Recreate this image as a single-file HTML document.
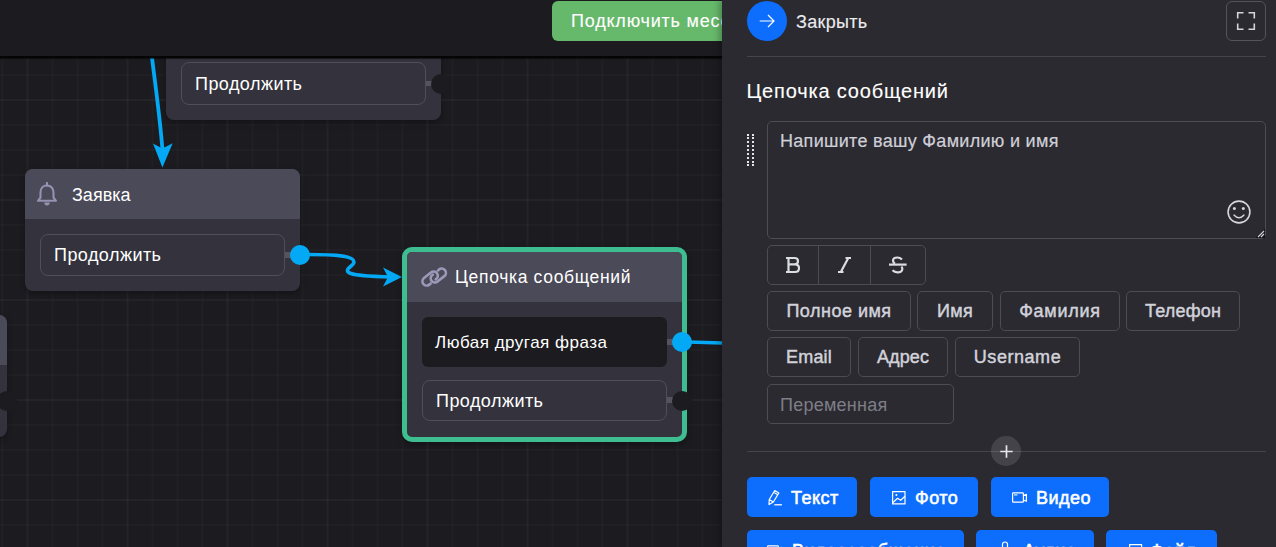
<!DOCTYPE html>
<html><head><meta charset="utf-8">
<style>
*{box-sizing:border-box;margin:0;padding:0}
html,body{width:1276px;height:547px;overflow:hidden;background:#1c1b20;font-family:"Liberation Sans",sans-serif;}
.a{position:absolute}
.t{position:absolute;white-space:nowrap;line-height:normal}
#canvas{position:absolute;left:0;top:0;width:722px;height:547px;background-color:#1c1b20;
 background-image:
  linear-gradient(to right, rgba(255,255,255,0.02) 2px, transparent 2px),
  linear-gradient(to bottom, rgba(255,255,255,0.02) 2px, transparent 2px),
  linear-gradient(to right, rgba(255,255,255,0.02) 2px, transparent 2px),
  linear-gradient(to bottom, rgba(255,255,255,0.02) 2px, transparent 2px);
 background-size:100px 100px,100px 100px,25px 25px,25px 25px;
 background-position:26.5px 0,0 -1px,1.5px 0,0 -1px;}
.node{position:absolute;background:#34333d;border-radius:8px;box-shadow:0 3px 6px rgba(0,0,0,0.3)}
.nhead{position:absolute;left:0;top:0;right:0;background:#4b4a58}
.nbtn{position:absolute;border:1px solid #504f59;border-radius:8px}
.conn{position:absolute;height:6px;background:#55545e}
.hdark{position:absolute;width:20px;height:20px;border-radius:50%;background:#1c1b20}
.hblue{position:absolute;width:20px;height:20px;border-radius:50%;background:#03a9f4}
.vb{position:absolute;height:40px;border:1px solid #4d4c53;border-radius:5px}
.bb{position:absolute;height:40px;background:#0d6efd;border-radius:5px}
</style></head><body>
<div id="canvas"></div>
<svg class="a" style="left:0;top:0" width="722" height="547" viewBox="0 0 722 547">
 <path d="M151,50 C156,90 161,125 162.8,155" stroke="#03a9f4" stroke-width="3.8" fill="none"/>
 <path d="M162.4,167.5 L153,143.5 L162.3,148.5 L172.7,143.2 Z" fill="#03a9f4"/>
 <path d="M308,254.5 C338,254.5 354,256 354,262 C354,266 345,268 348,272 C352,276 372,276.5 392,277" stroke="#03a9f4" stroke-width="3.6" fill="none"/>
 <path d="M402,277 L383,267.5 L388,277 L383,286.5 Z" fill="#03a9f4"/>
 <path d="M688,342 L722,343" stroke="#03a9f4" stroke-width="3.6" fill="none"/>
</svg>
<div class="node" style="left:166px;top:20px;width:275px;height:100px"></div>
<div class="nbtn" style="left:181px;top:62px;width:245px;height:43px"></div>
<div class="conn" style="left:426px;top:81px;width:8px;height:5px"></div>
<div class="hdark" style="left:431px;top:74px"></div>
<div class="t" style="left:195px;top:74px;font-size:18px;color:#fff;font-weight:400;letter-spacing:0.45px;">Продолжить</div>
<div class="node" style="left:25px;top:169px;width:275px;height:122px;overflow:hidden"><div class="nhead" style="height:50px"></div></div>
<svg class="a" style="left:36px;top:182px" width="22" height="24" viewBox="0 0 22 24">
 <path d="M11 3.5 C7 3.5 4.5 6.5 4.5 10.5 L4.5 15.5 L2 18.8 L20 18.8 L17.5 15.5 L17.5 10.5 C17.5 6.5 15 3.5 11 3.5 Z" fill="none" stroke="#9493b3" stroke-width="2.1" stroke-linejoin="round"/>
 <path d="M11 1 L11 3.5" stroke="#9493b3" stroke-width="2.2" stroke-linecap="round"/>
 <path d="M8.2 20.5 L13.8 20.5 Q13.5 23.5 11 23.5 Q8.5 23.5 8.2 20.5 Z" fill="#9493b3"/>
</svg>
<div class="t" style="left:72px;top:185px;font-size:18px;color:#fff;font-weight:400;letter-spacing:0px;">Заявка</div>
<div class="nbtn" style="left:40px;top:234px;width:245px;height:42px"></div>
<div class="t" style="left:54px;top:245px;font-size:18px;color:#fff;font-weight:400;letter-spacing:0.45px;">Продолжить</div>
<div class="conn" style="left:285px;top:252px;width:8px"></div>
<div class="hblue" style="left:290px;top:245px"></div>
<div class="node" style="left:-270px;top:315px;width:277px;height:121.5px;overflow:hidden"><div class="nhead" style="height:50px"></div></div>
<div class="hdark" style="left:-3px;top:391px"></div>
<div class="a" style="left:402px;top:247px;width:285px;height:195px;border:5px solid #3ebe90;border-radius:10px;background:#34333d;overflow:hidden;box-shadow:0 3px 6px rgba(0,0,0,0.3)"><div class="nhead" style="height:50px"></div></div>
<svg class="a" style="left:410px;top:262px" width="50" height="32" viewBox="410 262 50 32">
 <g transform="translate(434.3,277.3) rotate(-39) scale(0.9)" fill="none" stroke="#9a99b8" stroke-width="2.9" stroke-linecap="round">
  <path d="M -7.5 2.85 L -9.4 2.85 A 4.7 4.7 0 0 1 -9.4 -6.55 L 0.5 -6.55 A 4.7 4.7 0 1 1 -0.32 2.78"/>
  <path d="M 8 -3.4 L 9.5 -3.4 A 4.7 4.7 0 0 1 9.5 6.0 L -0.2 6.0 A 4.7 4.7 0 1 1 0.62 -3.33"/>
 </g>
</svg>
<div class="t" style="left:455px;top:267px;font-size:17.5px;color:#fff;font-weight:400;letter-spacing:0.67px;">Цепочка сообщений</div>
<div class="a" style="left:422px;top:317px;width:245px;height:50px;background:#1c1b20;border-radius:6px"></div>
<div class="t" style="left:435px;top:333px;font-size:17px;color:#fff;font-weight:400;letter-spacing:0.5px;">Любая другая фраза</div>
<div class="nbtn" style="left:422px;top:380px;width:245px;height:41px"></div>
<div class="t" style="left:436px;top:391px;font-size:18px;color:#fff;font-weight:400;letter-spacing:0.45px;">Продолжить</div>
<div class="conn" style="left:667px;top:339px;width:8px"></div>
<div class="hblue" style="left:672px;top:332px"></div>
<div class="conn" style="left:667px;top:397px;width:8px"></div>
<div class="hdark" style="left:672px;top:390.5px"></div>
<div class="a" style="left:0;top:0;width:722px;height:57.5px;background:#1c1b20;border-bottom:2px solid #050506;box-shadow:0 1px 1px rgba(0,0,0,0.5)"></div>
<div class="a" style="left:552px;top:1px;width:200px;height:40px;background:#66b86b;border-radius:6px"></div>
<div class="t" style="left:571px;top:11px;font-size:18px;color:#fff;font-weight:400;letter-spacing:0.8px;-webkit-text-stroke:0.12px #fff;">Подключить мессенджер</div>
<div class="a" style="left:722px;top:0;width:554px;height:547px;background:#2b2a30;box-shadow:-3px 0 6px rgba(0,0,0,0.25)"></div>
<div class="a" style="left:747px;top:1px;width:40px;height:40px;border-radius:50%;background:#0d6efd"></div>
<svg class="a" style="left:757px;top:11px" width="20" height="20" viewBox="0 0 20 20">
 <path d="M2.7 10 H17 M11 4 L17 10 L11 16" fill="none" stroke="#fff" stroke-width="1.2"/>
</svg>
<div class="t" style="left:796px;top:12px;font-size:18px;color:#ececf0;font-weight:400;letter-spacing:0.3px;-webkit-text-stroke:0.12px #ececf0;">Закрыть</div>
<div class="a" style="left:1226px;top:1px;width:40px;height:40px;border:1px solid #55545b;border-radius:6px"></div>
<svg class="a" style="left:1236px;top:11px" width="20" height="20" viewBox="0 0 20 20">
 <path d="M1.7 7.5 V1.7 H7.5 M12.5 1.7 H18.3 V7.5 M18.3 12.5 V18.3 H12.5 M7.5 18.3 H1.7 V12.5" fill="none" stroke="#d4d4dc" stroke-width="1.6"/>
</svg>
<div class="a" style="left:747px;top:56px;width:519px;height:1px;background:#45444b"></div>
<div class="t" style="left:746.5px;top:80px;font-size:20px;color:#fff;font-weight:400;letter-spacing:0.82px;-webkit-text-stroke:0.12px #fff;">Цепочка сообщений</div>
<svg class="a" style="left:740px;top:130px" width="20" height="40" viewBox="740 130 20 40"><g fill="#e6e6ea"><rect x="747" y="134" width="2" height="2"/><rect x="747" y="137" width="2" height="2"/><rect x="747" y="141" width="2" height="2"/><rect x="747" y="145" width="2" height="2"/><rect x="747" y="149" width="2" height="2"/><rect x="747" y="153" width="2" height="2"/><rect x="747" y="157" width="2" height="2"/><rect x="747" y="161" width="2" height="2"/><rect x="747" y="164" width="2" height="2"/><rect x="752" y="134" width="2" height="2"/><rect x="752" y="137" width="2" height="2"/><rect x="752" y="141" width="2" height="2"/><rect x="752" y="145" width="2" height="2"/><rect x="752" y="149" width="2" height="2"/><rect x="752" y="153" width="2" height="2"/><rect x="752" y="157" width="2" height="2"/><rect x="752" y="161" width="2" height="2"/><rect x="752" y="164" width="2" height="2"/></g></svg>
<div class="a" style="left:767px;top:121px;width:499px;height:118px;border:1px solid #4d4c53;border-radius:5px"></div>
<div class="t" style="left:780px;top:131px;font-size:18px;color:#cfcfd8;font-weight:400;letter-spacing:0.3px;-webkit-text-stroke:0.2px #cfcfd8;">Напишите вашу Фамилию и имя</div>
<svg class="a" style="left:1226px;top:199px" width="26" height="26" viewBox="0 0 26 26">
 <circle cx="13" cy="13" r="10.9" fill="none" stroke="#d6d6de" stroke-width="1.6"/>
 <circle cx="8.4" cy="9.6" r="1.5" fill="#d6d6de"/><circle cx="17.3" cy="9.6" r="1.5" fill="#d6d6de"/>
 <path d="M8.2 16.2 Q13 21.2 17.8 16.2" fill="none" stroke="#d6d6de" stroke-width="1.6" stroke-linecap="round"/>
</svg>
<svg class="a" style="left:1254px;top:227px" width="12" height="12" viewBox="0 0 12 12">
 <path d="M11 1.5 L11 11 L1.5 11 Z" fill="#141417"/>
 <path d="M10 4 L4 10 M10 7 L7 10" stroke="#d0d0d6" stroke-width="1.3"/>
</svg>
<div class="a" style="left:767px;top:245px;width:159px;height:40px;border:1px solid #4d4c53;border-radius:5px"></div>
<div class="a" style="left:818px;top:245px;width:1px;height:40px;background:#4d4c53"></div>
<div class="a" style="left:870px;top:245px;width:1px;height:40px;background:#4d4c53"></div>
<svg class="a" style="left:780px;top:250px" width="135" height="30" viewBox="780 250 135 30">
 <g fill="none" stroke="#dcdce4" stroke-width="2.2" stroke-linejoin="round">
  <path d="M786 258 H794.5 Q798 258 798 261 Q798 264.3 794.5 264.3 H788.5 M788.5 258 V272 M786 272 H795 Q799 272 799 268.2 Q799 264.3 795 264.3"/>
  <path d="M845.5 258 H851 M838 272 H843.5 M848.3 258 L840.8 272"/>
  <path d="M889 264.6 H906.6"/>
  <path d="M902 259.5 Q900 257.5 897.5 257.5 Q893 257.5 893 260.8 Q893 262.5 895 263.6"/>
  <path d="M901.5 266.5 Q902.5 268 902.3 269.3 Q901.8 272.3 897.5 272.3 Q894.5 272.3 892.5 270.3"/>
 </g>
</svg>
<div class="vb" style="left:767px;top:291px;width:144px"></div>
<div class="t" style="left:767px;top:301px;width:144px;text-align:center;font-size:18px;color:#d2d2db;-webkit-text-stroke:0.45px #d2d2db;letter-spacing:0.5px">Полное имя</div>
<div class="vb" style="left:917px;top:291px;width:76px"></div>
<div class="t" style="left:917px;top:301px;width:76px;text-align:center;font-size:18px;color:#d2d2db;-webkit-text-stroke:0.45px #d2d2db;letter-spacing:0.3px">Имя</div>
<div class="vb" style="left:1000px;top:291px;width:120px"></div>
<div class="t" style="left:1000px;top:301px;width:120px;text-align:center;font-size:18px;color:#d2d2db;-webkit-text-stroke:0.45px #d2d2db;letter-spacing:0.75px">Фамилия</div>
<div class="vb" style="left:1126px;top:291px;width:114px"></div>
<div class="t" style="left:1126px;top:301px;width:114px;text-align:center;font-size:18px;color:#d2d2db;-webkit-text-stroke:0.45px #d2d2db;letter-spacing:0.2px">Телефон</div>
<div class="vb" style="left:767px;top:337px;width:84px"></div>
<div class="t" style="left:767px;top:347px;width:84px;text-align:center;font-size:18px;color:#d2d2db;-webkit-text-stroke:0.45px #d2d2db;letter-spacing:0.2px">Email</div>
<div class="vb" style="left:858px;top:337px;width:90px"></div>
<div class="t" style="left:858px;top:347px;width:90px;text-align:center;font-size:18px;color:#d2d2db;-webkit-text-stroke:0.45px #d2d2db;letter-spacing:0.1px">Адрес</div>
<div class="vb" style="left:955px;top:337px;width:125px"></div>
<div class="t" style="left:955px;top:347px;width:125px;text-align:center;font-size:18px;color:#d2d2db;-webkit-text-stroke:0.45px #d2d2db;letter-spacing:0.55px">Username</div>
<div class="vb" style="left:767px;top:384px;width:187px"></div>
<div class="t" style="left:780px;top:395px;font-size:18px;color:#7f7e87;font-weight:400;letter-spacing:0.25px;">Переменная</div>
<div class="a" style="left:747px;top:451px;width:519px;height:1px;background:#45444b"></div>
<div class="a" style="left:991px;top:436px;width:30px;height:30px;border-radius:50%;background:rgba(255,255,255,0.12)"></div>
<svg class="a" style="left:996px;top:441px" width="20" height="20" viewBox="0 0 20 20"><path d="M10.5 4.3 V16.7 M4.3 10.5 H16.7" stroke="#e6e6ea" stroke-width="1.7"/></svg>
<div class="bb" style="left:747px;top:477px;width:110px"></div>
<div class="bb" style="left:870px;top:477px;width:108px"></div>
<div class="bb" style="left:991px;top:477px;width:118px"></div>
<div class="bb" style="left:747px;top:530px;width:217px"></div>
<div class="bb" style="left:976px;top:530px;width:118px"></div>
<div class="bb" style="left:1106px;top:530px;width:111px"></div>
<div class="t" style="left:791px;top:488px;font-size:18px;color:#fff;font-weight:400;letter-spacing:0.5px;-webkit-text-stroke:0.55px #fff;">Текст</div>
<div class="t" style="left:915px;top:488px;font-size:18px;color:#fff;font-weight:400;letter-spacing:0.5px;-webkit-text-stroke:0.55px #fff;">Фото</div>
<div class="t" style="left:1036px;top:488px;font-size:18px;color:#fff;font-weight:400;letter-spacing:0.5px;-webkit-text-stroke:0.55px #fff;">Видео</div>
<div class="t" style="left:792px;top:541px;font-size:18px;color:#fff;font-weight:400;letter-spacing:0.5px;-webkit-text-stroke:0.55px #fff;">Видеосообщение</div>
<div class="t" style="left:1023px;top:541px;font-size:18px;color:#fff;font-weight:400;letter-spacing:0.5px;-webkit-text-stroke:0.55px #fff;">Аудио</div>
<div class="t" style="left:1150px;top:541px;font-size:18px;color:#fff;font-weight:400;letter-spacing:0.5px;-webkit-text-stroke:0.55px #fff;">Файл</div>
<svg class="a" style="left:760px;top:480px" width="460" height="67" viewBox="760 480 460 67">
 <g fill="none" stroke="#fff" stroke-width="1.2" stroke-linejoin="round">
  <path d="M774.76,490.54 L778.84,493.06 L773.35,502.0 L769,504.5 L769.26,499.5 Z M773.7,492.24 L777.8,494.76 M769.26,499.5 L773.35,502.0"/>
  <rect x="892.6" y="491.6" width="12.4" height="12.3"/>
  <path d="M893 502.5 L897.5 498.3 L900.7 500.3 L905 496.2"/>
  <rect x="1012.6" y="492.8" width="10.8" height="9.4" rx="0.8"/>
  <path d="M1023.4 495.5 L1026.4 494.3 V501.3 L1023.4 500.1"/>
  <rect x="767.6" y="545.8" width="10.8" height="9.4" rx="0.8"/>
  <path d="M778.4 548.5 L781.4 547.3 V554.3 L778.4 553.1"/>
  <rect x="1002.5" y="542" width="5" height="9" rx="2.5"/>
  <rect x="1129.6" y="544.6" width="12" height="12"/>
 </g>
 <circle cx="896.4" cy="494.9" r="1" fill="#fff"/>
 <rect x="774.3" y="504" width="7.6" height="1.5" fill="#fff" opacity="0.85"/>
 <rect x="1014" y="494.2" width="3.5" height="1.4" fill="#fff" opacity="0.7"/>
</svg>
</body></html>
